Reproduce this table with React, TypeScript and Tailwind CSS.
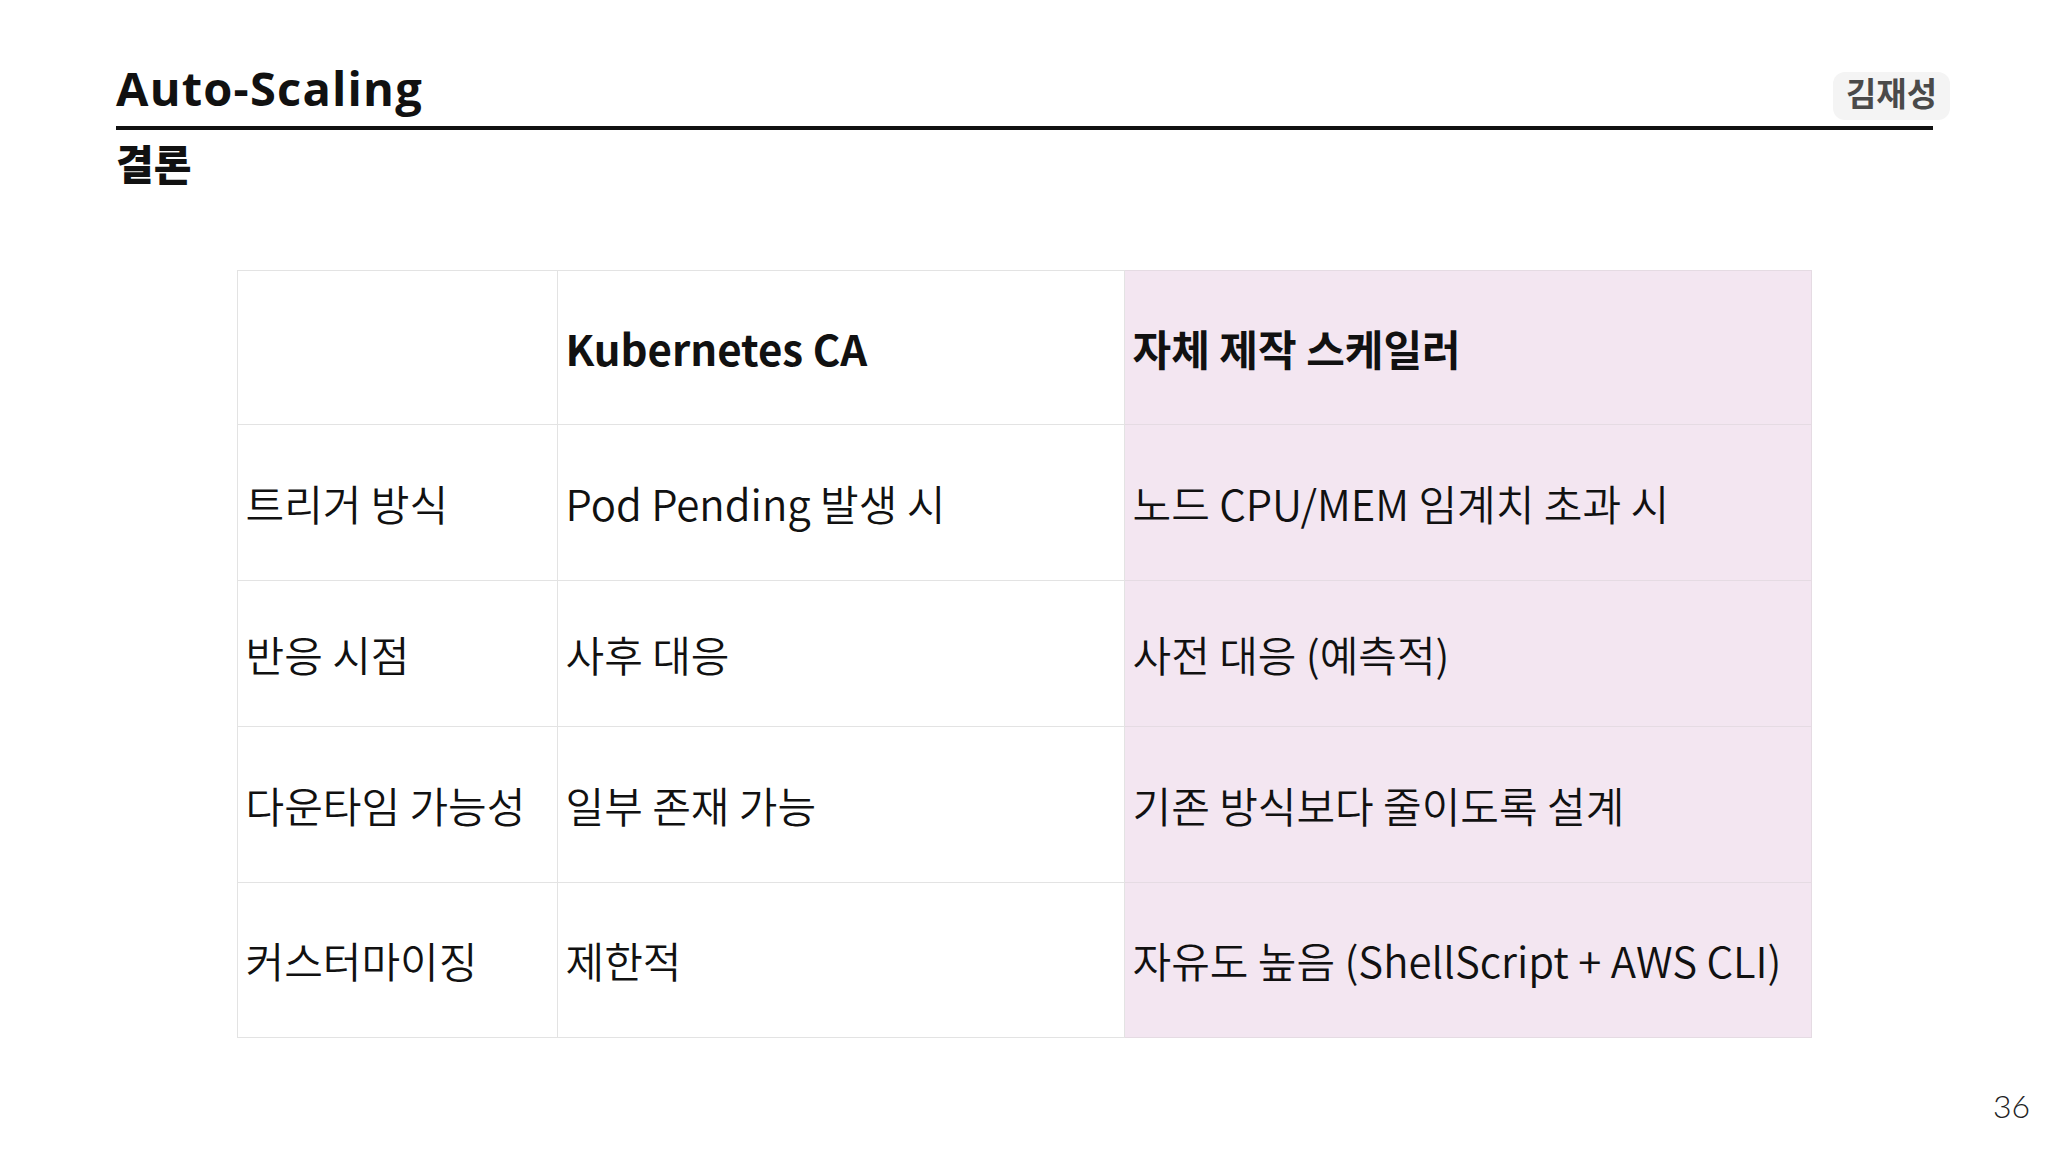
import React from 'react';

const rows = [
  { label: '트리거 방식', ca: 'Pod Pending 발생 시', custom: '노드 CPU/MEM 임계치 초과 시', h: 'h-[156px]' },
  { label: '반응 시점', ca: '사후 대응', custom: '사전 대응 (예측적)', h: 'h-[146px]' },
  { label: '다운타임 가능성', ca: '일부 존재 가능', custom: '기존 방식보다 줄이도록 설계', h: 'h-[156px]' },
  { label: '커스터마이징', ca: '제한적', custom: '자유도 높음 (ShellScript + AWS CLI)', h: 'h-[155px]' },
];

export default function App() {
  return (
    <div className="w-[2048px] h-[1152px] bg-white flex flex-col text-[#111] font-['Noto_Sans_CJK_KR','Noto_Sans',sans-serif]">
      {/* Header */}
      <div className="pt-[58px] pl-[116px] pr-[98px]">
        <div className="flex justify-between items-start h-[60px]">
          <h1 className="font-['Open_Sans','Noto_Sans_CJK_KR',sans-serif] font-bold text-[47px] leading-[60px] tracking-[1.2px]">
            Auto-Scaling
          </h1>
          <div className="mt-[14px] h-[48px] pb-[6px] px-[13px] rounded-xl bg-[#f4f4f4] flex items-center text-[33px] font-bold text-[#4a4a4a]">
            김재성
          </div>
        </div>
      </div>
      <div className="mt-[8px] ml-[116px] mr-[115px] h-[4px] bg-[#111]" />
      <h2 className="mt-[8px] pl-[116px] text-[41px] leading-[48px] font-black">결론</h2>

      {/* Comparison table */}
      <div className="flex justify-center mt-[84px]">
        <table className="border-collapse text-[42px] leading-none font-[350]">
          <colgroup>
            <col className="w-[320px]" />
            <col className="w-[567px]" />
            <col className="w-[687px]" />
          </colgroup>
          <thead>
            <tr className="h-[154px]">
              <th className="border border-[#e3e3e3]" />
              <th className="border border-[#e3e3e3] text-left pl-[8px] font-bold">Kubernetes CA</th>
              <th className="border border-[#e5dbe3] bg-[#f3e6f1] text-left pl-[8px] font-bold">자체 제작 스케일러</th>
            </tr>
          </thead>
          <tbody>
            {rows.map(r => (
              <tr key={r.label} className={r.h}>
                <td className="border border-[#e3e3e3] pl-[8px] whitespace-nowrap">{r.label}</td>
                <td className="border border-[#e3e3e3] pl-[8px] whitespace-nowrap">{r.ca}</td>
                <td className="border border-[#e5dbe3] bg-[#f3e6f1] pl-[8px] whitespace-nowrap">{r.custom}</td>
              </tr>
            ))}
          </tbody>
        </table>
      </div>

      {/* Page number */}
      <div className="mt-auto flex justify-end pr-[18px] pb-[30px]">
        <span className="font-['Lato',sans-serif] font-light text-[32px] leading-none text-[#222]">36</span>
      </div>
    </div>
  );
}
